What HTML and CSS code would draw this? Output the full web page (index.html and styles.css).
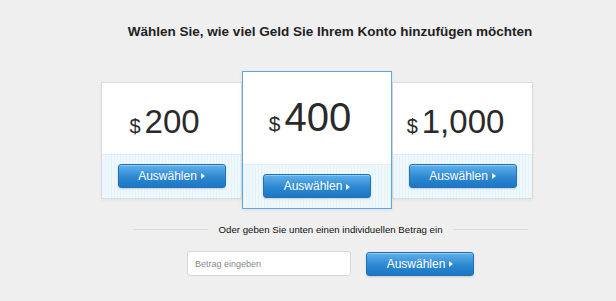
FILE: index.html
```html
<!DOCTYPE html>
<html lang="de">
<head>
  <meta charset="UTF-8" />
  <title>Guthaben aufladen</title>
  <link rel="stylesheet" href="styles.css">
</head>
<body>

  <div class="wrapper">
    <h1 class="title">Wählen Sie, wie viel Geld Sie Ihrem Konto hinzufügen möchten</h1>

    <div class="plans">
      <div class="plan">
        <div class="plan-amount"><span class="currency">$</span><span class="value">200</span></div>
        <div class="plan-footer">
          <button type="button" class="select-btn">Auswählen<span class="arrow"></span></button>
        </div>
      </div>

      <div class="plan plan-featured">
        <div class="plan-amount"><span class="currency">$</span><span class="value">400</span></div>
        <div class="plan-footer">
          <button type="button" class="select-btn">Auswählen<span class="arrow"></span></button>
        </div>
      </div>

      <div class="plan">
        <div class="plan-amount"><span class="currency">$</span><span class="value">1,000</span></div>
        <div class="plan-footer">
          <button type="button" class="select-btn">Auswählen<span class="arrow"></span></button>
        </div>
      </div>
    </div>

    <div class="divider">
      <span class="line"></span>
      <span class="divider-text">Oder geben Sie unten einen individuellen Betrag ein</span>
      <span class="line"></span>
    </div>

    <div class="custom">
      <input type="text" class="amount-input" placeholder="Betrag eingeben" aria-label="Betrag eingeben" />
      <button type="button" class="select-btn">Auswählen<span class="arrow"></span></button>
    </div>
  </div>

</body>
</html>
```

FILE: styles.css
```css
body {
  margin: 0;
  font-family: 'Liberation Sans', Arial, sans-serif;
  background-color: #efefef;
  color: #222;
  height: 301px;
  overflow: hidden;
}

.wrapper {
  margin-left: 101px;
  width: 458px;
}

.title {
  margin: 0;
  padding-top: 23px;
  font-size: 13.5px;
  font-weight: 700;
  line-height: 17px;
  text-align: center;
  color: #222;
}

/* tarjetas */
.plans {
  display: flex;
  align-items: center;
  margin-top: 31px;
}

.plan {
  width: 141px;
  box-sizing: border-box;
  background-color: #fff;
  border: 1px solid #dcdcdc;
  box-shadow: 0 1px 3px rgba(0, 0, 0, 0.06);
}

.plan-amount {
  height: 71px;
  box-sizing: border-box;
  padding: 21px 14px 0 0;
  display: flex;
  justify-content: center;
  align-items: baseline;
  gap: 4px;
  color: #2a2a2a;
}

.currency {
  font-size: 20px;
  line-height: 20px;
}

.value {
  font-size: 33px;
  line-height: 36px;
}

.plan-footer {
  height: 44px;
  box-sizing: border-box;
  padding-top: 9px;
  display: flex;
  justify-content: center;
  background-color: #e9f5fc;
  background-image: repeating-linear-gradient(90deg, #e4f2fb 0, #e4f2fb 1px, #eff8fd 1px, #eff8fd 3px);
  border-top: 1px solid #e2eef6;
}

.plan-featured {
  width: 150px;
  border: 1px solid #5ba8e2;
  box-shadow: 0 1px 4px rgba(0, 0, 0, 0.08);
  position: relative;
  z-index: 1;
}

.plan-featured .plan-amount {
  height: 92px;
  padding-top: 22px;
}

.plan-featured .value {
  font-size: 40px;
  line-height: 46px;
}

.plan-featured .currency {
  font-size: 21px;
}

/* botones */
.select-btn {
  width: 108px;
  height: 24px;
  padding: 0;
  border: 1px solid #1f72b8;
  border-radius: 3px;
  background: linear-gradient(#62b1ea, #2d88d2 55%, #1c76c4);
  box-shadow: inset 0 1px 0 rgba(255, 255, 255, 0.3), 0 1px 2px rgba(0, 0, 0, 0.15);
  color: #fff;
  font-family: 'Liberation Sans', Arial, sans-serif;
  font-size: 12px;
  display: flex;
  justify-content: center;
  align-items: center;
  gap: 4px;
  cursor: pointer;
}

.arrow {
  width: 0;
  height: 0;
  border-top: 3px solid transparent;
  border-bottom: 3px solid transparent;
  border-left: 4px solid #fff;
  margin-top: 1px;
}

/* separador */
.divider {
  display: flex;
  align-items: center;
  gap: 10px;
  width: 395px;
  margin: 15px 0 0 32px;
}

.line {
  flex: 1;
  height: 1px;
  background-color: #dadada;
}

.divider-text {
  font-size: 9.7px;
  color: #111;
  white-space: nowrap;
}

.custom {
  display: flex;
  align-items: center;
  gap: 15px;
  margin: 16px 0 0 86px;
}

.amount-input {
  width: 164px;
  height: 25px;
  box-sizing: border-box;
  padding: 0 7px;
  border: 1px solid #d8d8d8;
  border-radius: 3px;
  background-color: #fff;
  font-family: 'Liberation Sans', Arial, sans-serif;
  font-size: 9px;
  color: #333;
}

.amount-input::placeholder {
  color: #888;
}

.amount-input:focus {
  outline: none;
  border-color: #5ba8e2;
}
```
